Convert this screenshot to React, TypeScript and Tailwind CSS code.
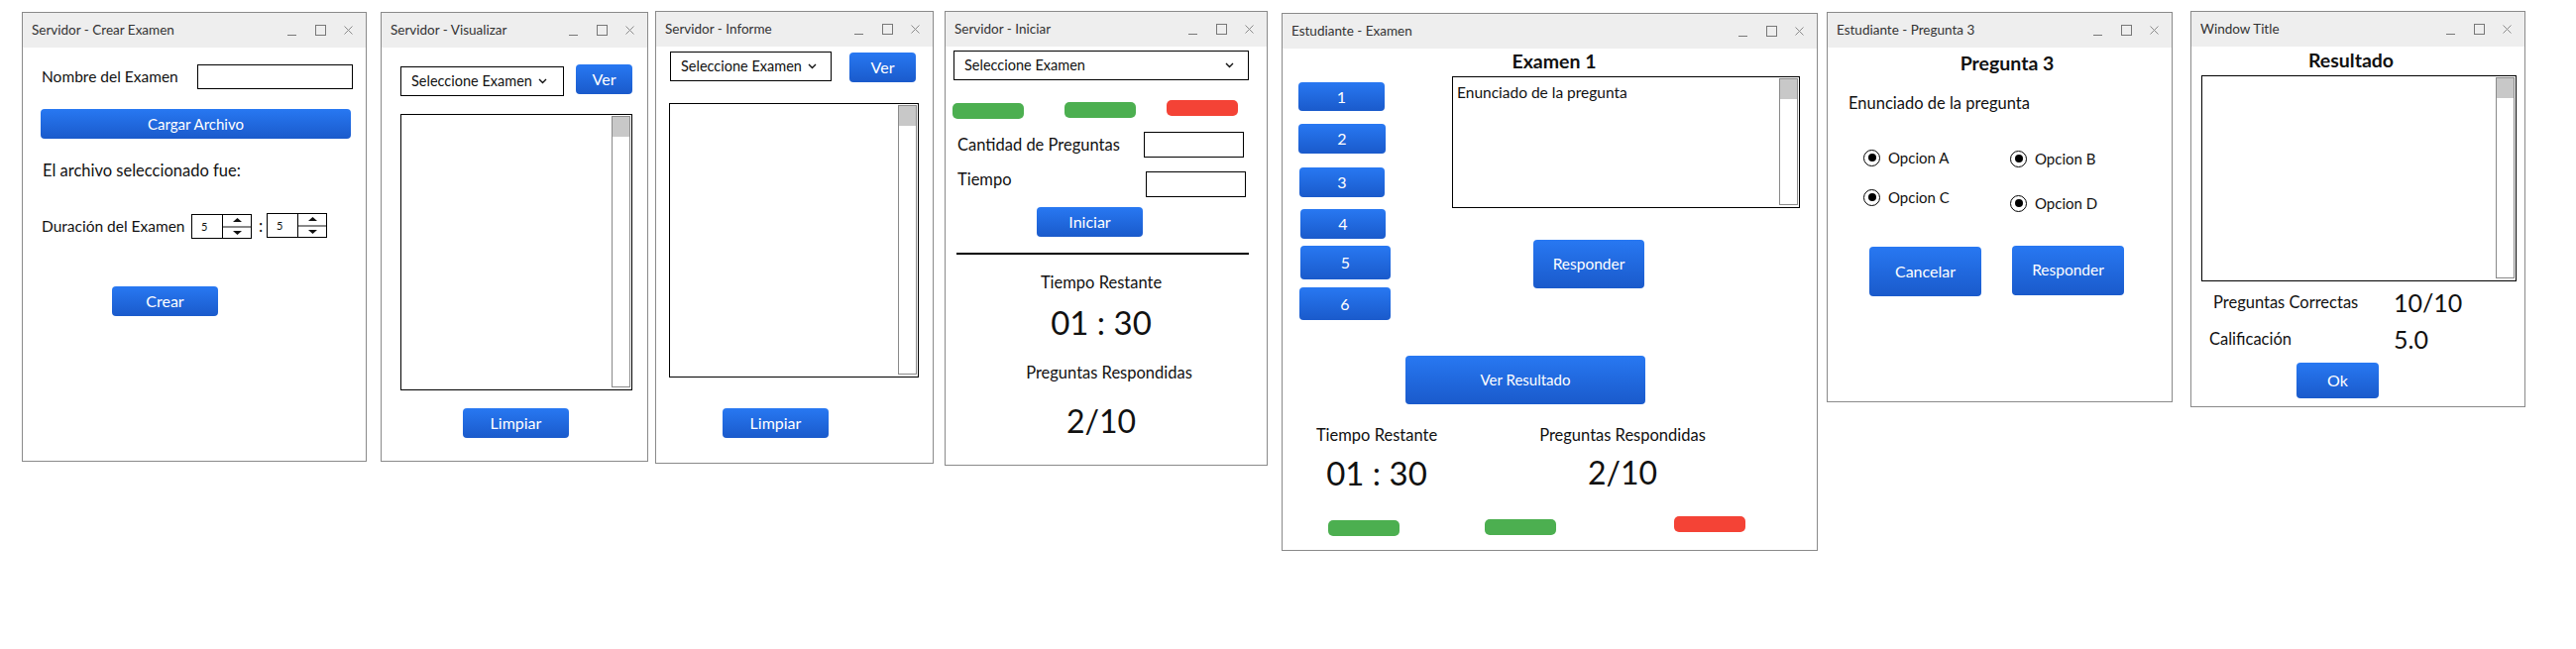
import type { ReactNode } from "react";

type Props = { className?: string; children?: ReactNode };

function TitleBar({ title }: { title: string }) {
  return (
    <div className="flex h-[35px] shrink-0 items-center justify-between self-stretch bg-[#eeeeee] pl-[9px] pr-[13px]">
      <span className="whitespace-nowrap text-[13.5px] text-[#333]">{title}</span>
      <div className="flex items-center">
        <span className="h-[11px] w-[9px] border-b border-[#777]" />
        <span className="ml-[19px] h-[11px] w-[11px] border border-[#777]" />
        <svg className="ml-[18px]" width="9" height="9" viewBox="0 0 9 9">
          <path d="M0.5 0.5 L8.5 8.5 M8.5 0.5 L0.5 8.5" stroke="#8a8a8a" strokeWidth="1" />
        </svg>
      </div>
    </div>
  );
}

function Win({ title, className, children }: Props & { title: string }) {
  return (
    <div className={`flex shrink-0 flex-col items-start border border-[#8a8a8a] bg-white ${className}`}>
      <TitleBar title={title} />
      {children}
    </div>
  );
}

function Btn({ className, children }: Props) {
  return (
    <div
      className={`flex shrink-0 items-center justify-center whitespace-nowrap rounded-[4px] bg-linear-to-b from-[#2878f2] to-[#1a5acb] text-white ${className}`}
    >
      {children}
    </div>
  );
}

function Chevron() {
  return (
    <svg width="9" height="6" viewBox="0 0 9 6">
      <path d="M1 1 L4.5 4.5 L8 1" fill="none" stroke="#111" strokeWidth="1.4" />
    </svg>
  );
}

function Select({ className, spread }: Props & { spread?: boolean }) {
  return (
    <div
      className={`flex shrink-0 items-center whitespace-nowrap border border-black pl-[10px] text-[14.5px] ${
        spread ? "justify-between pr-[14px]" : "gap-[6px]"
      } ${className}`}
    >
      <span>Seleccione Examen</span>
      <Chevron />
    </div>
  );
}

function TextArea({ className, children }: Props) {
  return (
    <div className={`flex shrink-0 border border-black ${className}`}>
      <div className="flex-1 whitespace-nowrap px-[4px] pt-[3px] text-[15.5px] leading-[24px]">{children}</div>
      <div className="mb-[2px] mr-[1px] mt-[1px] w-[19px] border border-[#8a8a8a]">
        <div className="h-[20px] bg-[#c8c8c8]" />
      </div>
    </div>
  );
}

function Spinner({ className }: Props) {
  return (
    <div className={`flex h-[25px] w-[61px] shrink-0 border border-black ${className}`}>
      <div className="w-[30px] pl-[9px] text-[11px] leading-[23px]">5</div>
      <div className="flex flex-1 flex-col items-center justify-between border-l border-black py-[3px]">
        <svg width="9" height="4" viewBox="0 0 9 4">
          <path d="M0 4 L4.5 0 L9 4 Z" fill="#111" />
        </svg>
        <div className="h-[2px] w-full bg-[#888]" />
        <svg width="9" height="4" viewBox="0 0 9 4">
          <path d="M0 0 L4.5 4 L9 0 Z" fill="#111" />
        </svg>
      </div>
    </div>
  );
}

function Radio({ label, className }: { label: string; className?: string }) {
  return (
    <div className={`flex h-[24px] items-center ${className}`}>
      <span className="flex h-[17px] w-[17px] items-center justify-center rounded-full border-[1.5px] border-black">
        <span className="h-[8px] w-[8px] rounded-full bg-black" />
      </span>
      <span className="ml-[8px] whitespace-nowrap text-[15px]">{label}</span>
    </div>
  );
}

export default function App() {
  return (
    <div className="flex h-[655px] w-[2599px] items-start bg-white font-['Lato',sans-serif] text-[#111]">
      {/* Servidor - Crear Examen */}
      <Win title="Servidor - Crear Examen" className="ml-[22px] mt-[12px] h-[454px] w-[348px]">
        <div className="ml-[19px] mt-[17px] flex items-center">
          <span className="w-[157px] whitespace-nowrap text-[15.5px]">Nombre del Examen</span>
          <div className="h-[25px] w-[157px] border border-black" />
        </div>
        <Btn className="ml-[18px] mt-[20px] h-[30px] w-[313px] text-[15px]">Cargar Archivo</Btn>
        <p className="ml-[20px] mt-[20px] whitespace-nowrap text-[16.5px] leading-[24px]">El archivo seleccionado fue:</p>
        <div className="ml-[19px] mt-[31px] flex items-start">
          <span className="w-[151px] whitespace-nowrap text-[15.5px] leading-[26px]">Duración del Examen</span>
          <Spinner className="mt-[1px]" />
          <span className="w-[15px] pl-[7px] text-[17px] leading-[26px]">:</span>
          <Spinner />
        </div>
        <Btn className="ml-[90px] mt-[48px] h-[30px] w-[107px] text-[16px]">Crear</Btn>
      </Win>

      {/* Servidor - Visualizar */}
      <Win title="Servidor - Visualizar" className="ml-[14px] mt-[12px] h-[454px] w-[270px]">
        <div className="ml-[19px] mt-[17px] flex items-start">
          <Select className="mt-[2px] h-[30px] w-[165px]" />
          <Btn className="ml-[12px] h-[30px] w-[57px] text-[16px]">Ver</Btn>
        </div>
        <TextArea className="ml-[19px] mt-[18px] h-[279px] w-[234px]" />
        <Btn className="ml-[82px] mt-[18px] h-[30px] w-[107px] text-[16px]">Limpiar</Btn>
      </Win>

      {/* Servidor - Informe */}
      <Win title="Servidor - Informe" className="ml-[7px] mt-[11px] h-[457px] w-[281px]">
        <div className="ml-[14px] mt-[5px] flex items-start">
          <Select className="h-[30px] w-[163px]" />
          <Btn className="ml-[18px] mt-[1px] h-[30px] w-[67px] text-[16px]">Ver</Btn>
        </div>
        <TextArea className="ml-[13px] mt-[21px] h-[277px] w-[252px]" />
        <Btn className="ml-[67px] mt-[31px] h-[30px] w-[107px] text-[16px]">Limpiar</Btn>
      </Win>

      {/* Servidor - Iniciar */}
      <Win title="Servidor - Iniciar" className="ml-[11px] mt-[11px] h-[459px] w-[326px]">
        <Select spread className="ml-[8px] mt-[4px] h-[30px] w-[298px]" />
        <div className="mt-[20px] flex items-start">
          <div className="ml-[7px] mt-[3px] h-[16px] w-[72px] rounded-[5px] bg-[#4caf50]" />
          <div className="ml-[41px] mt-[2px] h-[16px] w-[72px] rounded-[5px] bg-[#4caf50]" />
          <div className="ml-[31px] h-[16px] w-[72px] rounded-[5px] bg-[#f44336]" />
        </div>
        <div className="ml-[12px] mt-[13px] flex items-center">
          <span className="w-[188px] whitespace-nowrap text-[16.5px]">Cantidad de Preguntas</span>
          <div className="h-[26px] w-[101px] border border-black" />
        </div>
        <div className="ml-[12px] mt-[10px] flex items-start">
          <span className="w-[190px] text-[16.5px] leading-[24px]">Tiempo</span>
          <div className="mt-[4px] h-[26px] w-[101px] border border-black" />
        </div>
        <Btn className="ml-[92px] mt-[10px] h-[30px] w-[107px] text-[16px]">Iniciar</Btn>
        <div className="ml-[11px] mt-[16px] h-[2px] w-[295px] bg-black" />
        <p className="mt-[16px] self-stretch pr-[10px] text-center text-[16.5px] leading-[24px]">Tiempo Restante</p>
        <p className="mt-[8px] self-stretch pr-[10px] text-center text-[33px] leading-[40px]">01 : 30</p>
        <p className="mt-[19px] self-stretch pl-[6px] text-center text-[16.5px] leading-[24px]">Preguntas Respondidas</p>
        <p className="mt-[17px] self-stretch pr-[10px] text-center text-[32px] leading-[40px]">2/10</p>
      </Win>

      {/* Estudiante - Examen */}
      <Win title="Estudiante - Examen" className="ml-[14px] mt-[13px] h-[543px] w-[541px]">
        <h2 className="self-stretch pl-[9px] text-center text-[19.5px] font-bold leading-[26px]">Examen 1</h2>
        <div className="flex items-start">
          <div className="mt-[8px] flex flex-col items-start text-[16px]">
            <Btn className="ml-[16px] h-[29px] w-[87px]">1</Btn>
            <Btn className="ml-[16px] mt-[13px] h-[30px] w-[88px]">2</Btn>
            <Btn className="ml-[17px] mt-[14px] h-[30px] w-[86px]">3</Btn>
            <Btn className="ml-[18px] mt-[12px] h-[30px] w-[86px]">4</Btn>
            <Btn className="ml-[18px] mt-[7px] h-[34px] w-[91px]">5</Btn>
            <Btn className="ml-[17px] mt-[8px] h-[33px] w-[92px]">6</Btn>
          </div>
          <div className="ml-[62px] mt-[2px] flex flex-col items-start">
            <TextArea className="h-[133px] w-[351px]">Enunciado de la pregunta</TextArea>
            <Btn className="ml-[82px] mt-[32px] h-[49px] w-[112px] text-[15.5px]">Responder</Btn>
          </div>
        </div>
        <Btn className="ml-[124px] mt-[36px] h-[49px] w-[242px] text-[15px]">Ver Resultado</Btn>
        <div className="mt-[19px] flex items-start">
          <div className="flex w-[190px] flex-col items-center">
            <span className="whitespace-nowrap text-[16.5px] leading-[24px]">Tiempo Restante</span>
            <span className="mt-[6px] whitespace-nowrap text-[33px] leading-[40px]">01 : 30</span>
          </div>
          <div className="ml-[58px] flex w-[190px] flex-col items-center">
            <span className="whitespace-nowrap text-[16.5px] leading-[24px]">Preguntas Respondidas</span>
            <span className="mt-[6px] whitespace-nowrap text-[32px] leading-[40px]">2/10</span>
          </div>
        </div>
        <div className="mt-[24px] flex items-start">
          <div className="ml-[46px] mt-[4px] h-[16px] w-[72px] rounded-[5px] bg-[#4caf50]" />
          <div className="ml-[86px] mt-[3px] h-[16px] w-[72px] rounded-[5px] bg-[#4caf50]" />
          <div className="ml-[119px] h-[16px] w-[72px] rounded-[5px] bg-[#f44336]" />
        </div>
      </Win>

      {/* Estudiante - Pregunta 3 */}
      <Win title="Estudiante - Pregunta 3" className="ml-[9px] mt-[12px] h-[394px] w-[349px]">
        <h2 className="mt-[3px] self-stretch pl-[15px] text-center text-[19.5px] font-bold leading-[26px]">Pregunta 3</h2>
        <p className="ml-[21px] mt-[15px] whitespace-nowrap text-[16.5px] leading-[24px]">Enunciado de la pregunta</p>
        <div className="mt-[31px] flex items-start">
          <div className="ml-[36px] flex w-[148px] flex-col items-start">
            <Radio label="Opcion A" />
            <Radio label="Opcion C" className="mt-[16px]" />
          </div>
          <div className="mt-[1px] flex flex-col items-start">
            <Radio label="Opcion B" />
            <Radio label="Opcion D" className="mt-[21px]" />
          </div>
        </div>
        <div className="mt-[31px] flex items-start">
          <Btn className="ml-[42px] mt-[1px] h-[50px] w-[113px] text-[16px]">Cancelar</Btn>
          <Btn className="ml-[31px] h-[50px] w-[113px] text-[15.5px]">Responder</Btn>
        </div>
      </Win>

      {/* Window Title - Resultado */}
      <Win title="Window Title" className="ml-[18px] mt-[11px] h-[400px] w-[338px]">
        <h2 className="mt-[1px] self-stretch pr-[14px] text-center text-[19.5px] font-bold leading-[26px]">Resultado</h2>
        <TextArea className="ml-[10px] mt-[2px] h-[208px] w-[318px]" />
        <div className="ml-[22px] mt-[4px] flex h-[34px] items-center">
          <span className="w-[182px] whitespace-nowrap text-[16.5px]">Preguntas Correctas</span>
          <span className="whitespace-nowrap text-[25px] leading-[34px]">10/10</span>
        </div>
        <div className="ml-[18px] mt-[3px] flex h-[34px] items-center">
          <span className="w-[186px] whitespace-nowrap text-[16.5px]">Calificación</span>
          <span className="whitespace-nowrap text-[25px] leading-[34px]">5.0</span>
        </div>
        <Btn className="ml-[106px] mt-[7px] h-[36px] w-[83px] text-[16px]">Ok</Btn>
      </Win>
    </div>
  );
}
